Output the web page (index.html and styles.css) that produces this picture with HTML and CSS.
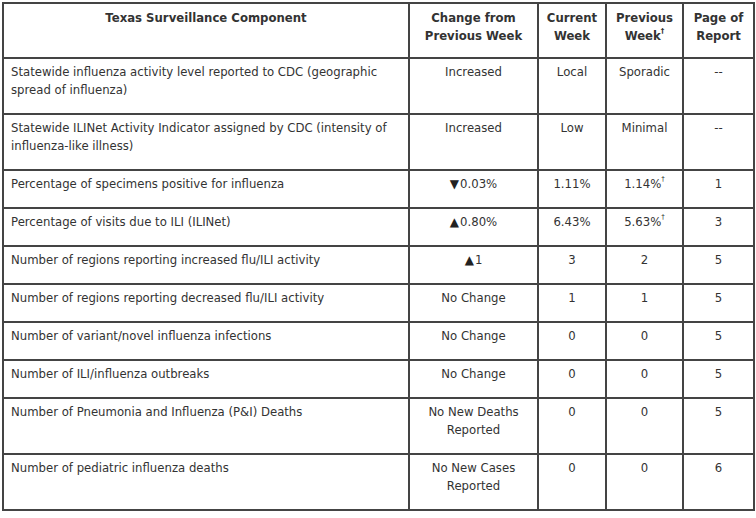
FILE: index.html
```html
<!DOCTYPE html>
<html>
<head>
<meta charset="utf-8">
<link rel="stylesheet" href="styles.css">
</head>
<body>
<table class="flu">
  <colgroup>
    <col class="c-comp"><col class="c-change"><col class="c-cur"><col class="c-prev"><col class="c-page">
  </colgroup>
  <thead>
    <tr>
      <th>Texas Surveillance Component</th>
      <th>Change from Previous Week</th>
      <th>Current Week</th>
      <th>Previous Week<sup>†</sup></th>
      <th>Page of Report</th>
    </tr>
  </thead>
  <tbody>
    <tr>
      <td class="lbl">Statewide influenza activity level reported to CDC (geographic spread of influenza)</td>
      <td>Increased</td><td>Local</td><td>Sporadic</td><td>--</td>
    </tr>
    <tr>
      <td class="lbl">Statewide ILINet Activity Indicator assigned by CDC (intensity of influenza-like illness)</td>
      <td>Increased</td><td>Low</td><td>Minimal</td><td>--</td>
    </tr>
    <tr>
      <td class="lbl">Percentage of specimens positive for influenza</td>
      <td><span class="tri">▼</span>0.03%</td><td>1.11%</td><td>1.14%<sup>†</sup></td><td>1</td>
    </tr>
    <tr>
      <td class="lbl">Percentage of visits due to ILI (ILINet)</td>
      <td><span class="tri">▲</span>0.80%</td><td>6.43%</td><td>5.63%<sup>†</sup></td><td>3</td>
    </tr>
    <tr>
      <td class="lbl">Number of regions reporting increased flu/ILI activity</td>
      <td><span class="tri">▲</span>1</td><td>3</td><td>2</td><td>5</td>
    </tr>
    <tr>
      <td class="lbl">Number of regions reporting decreased flu/ILI activity</td>
      <td>No Change</td><td>1</td><td>1</td><td>5</td>
    </tr>
    <tr>
      <td class="lbl">Number of variant/novel influenza infections</td>
      <td>No Change</td><td>0</td><td>0</td><td>5</td>
    </tr>
    <tr>
      <td class="lbl">Number of ILI/influenza outbreaks</td>
      <td>No Change</td><td>0</td><td>0</td><td>5</td>
    </tr>
    <tr>
      <td class="lbl">Number of Pneumonia and Influenza (P&amp;I) Deaths</td>
      <td>No New Deaths Reported</td><td>0</td><td>0</td><td>5</td>
    </tr>
    <tr>
      <td class="lbl">Number of pediatric influenza deaths</td>
      <td>No New Cases Reported</td><td>0</td><td>0</td><td>6</td>
    </tr>
  </tbody>
</table>
</body>
</html>
```
FILE: styles.css
```css
html, body {
  margin: 0;
  padding: 0;
  background: #ffffff;
}
body {
  padding: 2px 2px;
  font-family: "DejaVu Sans", Verdana, sans-serif;
  font-size: 11.7px;
  color: #333333;
}
.flu {
  border-collapse: collapse;
  table-layout: fixed;
  width: 751px;
}
.c-comp { width: 406px; }
.c-change { width: 129px; }
.c-cur { width: 68px; }
.c-prev { width: 77px; }
.c-page { width: 71px; }
.flu th, .flu td {
  border: 2px solid #444444;
  vertical-align: top;
  text-align: center;
  line-height: 18px;
  padding: 4px 6px 14px;
}
.flu th {
  font-weight: bold;
  height: 36px;
  padding-top: 5px;
  padding-bottom: 12px;
  padding-left: 4px;
  padding-right: 4px;
}
.flu td.lbl {
  text-align: left;
  padding-left: 7px;
}
.flu sup {
  font-size: 7px;
  line-height: 1;
  vertical-align: 7px;
}
.tri {
  font-size: 12px;
  color: #222222;
  margin-right: 1px;
}
```
